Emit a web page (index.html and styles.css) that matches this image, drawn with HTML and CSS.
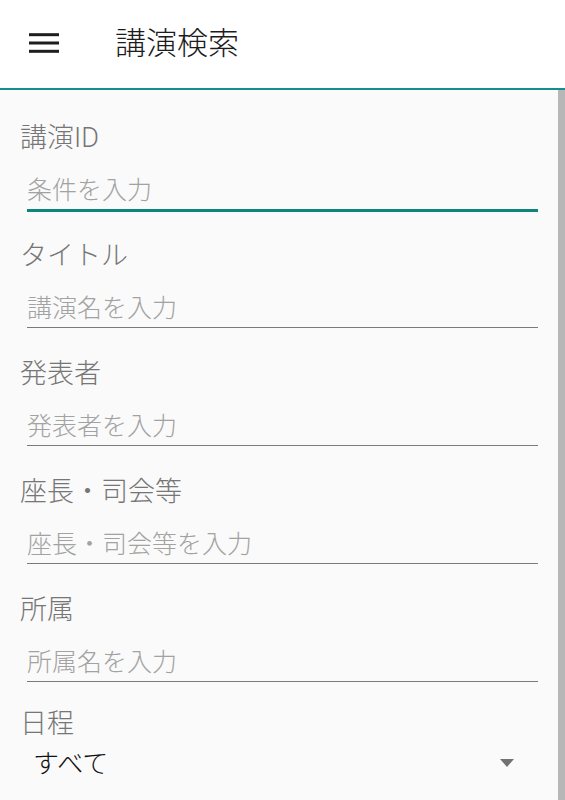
FILE: index.html
```html
<!DOCTYPE html>
<html lang="ja">
<head>
<meta charset="utf-8">
<title>講演検索</title>
<link rel="stylesheet" href="styles.css">
</head>
<body>
<header class="appbar">
  <svg class="menu" width="30" height="20" viewBox="0 0 30 20" aria-hidden="true">
    <rect x="0" y="0.2" width="30" height="3"/>
    <rect x="0" y="8.5" width="30" height="3"/>
    <rect x="0" y="16.8" width="30" height="3"/>
  </svg>
  <h1 class="title">講演検索</h1>
</header>
<div class="body">
  <main class="form">
    <div class="field">
      <label class="label">講演ID</label>
      <input class="input focused" type="text" placeholder="条件を入力">
    </div>
    <div class="field">
      <label class="label">タイトル</label>
      <input class="input" type="text" placeholder="講演名を入力">
    </div>
    <div class="field">
      <label class="label">発表者</label>
      <input class="input" type="text" placeholder="発表者を入力">
    </div>
    <div class="field">
      <label class="label">座長・司会等</label>
      <input class="input" type="text" placeholder="座長・司会等を入力">
    </div>
    <div class="field">
      <label class="label">所属</label>
      <input class="input" type="text" placeholder="所属名を入力">
    </div>
    <div class="field spinner-field">
      <label class="label">日程</label>
      <div class="spinner">
        <span class="spinner-value">すべて</span>
        <span class="caret"></span>
      </div>
    </div>
  </main>
  <div class="scrollbar"></div>
</div>
</body>
</html>
```

FILE: styles.css
```css
* { box-sizing: border-box; }
html, body {
  margin: 0;
  padding: 0;
  height: 100%;
  overflow: hidden;
}
body {
  font-family: Roboto, "Noto Sans CJK JP", sans-serif;
  font-weight: 300;
  background: #fafafa;
  display: flex;
  flex-direction: column;
}
.appbar {
  height: 90px;
  flex: none;
  background: #ffffff;
  border-bottom: 2px solid #14908a;
  display: flex;
  align-items: flex-start;
}
.menu {
  margin: 33px 0 0 29px;
  fill: #1e1e1e;
  flex: none;
}
.title {
  margin: 24px 0 0 56px;
  font-size: 31px;
  line-height: 40px;
  font-weight: 300;
  color: #1c1c1c;
}
.body {
  flex: 1;
  display: flex;
  min-height: 0;
}
.form {
  flex: 1;
  padding: 32px 20px 0 20px;
}
.scrollbar {
  width: 7px;
  flex: none;
  background: #b7b7b7;
}
.field {
  display: flex;
  flex-direction: column;
  height: 118px;
}
.label {
  font-size: 27px;
  line-height: 32px;
  color: #767676;
  margin-bottom: 18px;
}
.input {
  margin-left: 7px;
  width: 511px;
  height: 38px;
  padding: 3px 0 4px 0;
  border: 0;
  border-bottom: 1px solid #7a7a7a;
  background: transparent;
  font-family: Roboto, "Noto Sans CJK JP", sans-serif;
  font-weight: 300;
  font-size: 25px;
  line-height: 30px;
  color: #212121;
  outline: none;
}
.input::placeholder {
  color: #a2a2a2;
  opacity: 1;
}
.input.focused {
  border-bottom: 3px solid #0f857c;
  height: 40px;
  margin-bottom: -2px;
}
.spinner-field {
  margin-top: -4px;
}
.spinner-field .label {
  margin-bottom: 2px;
}
.spinner {
  display: flex;
  align-items: center;
  justify-content: space-between;
  margin-left: 13px;
  width: 481px;
  height: 40px;
}
.spinner-value {
  font-size: 26px;
  line-height: 40px;
  padding-top: 4px;
  color: #111111;
}
.caret {
  width: 0;
  height: 0;
  border-left: 7.5px solid transparent;
  border-right: 7.5px solid transparent;
  border-top: 8px solid #727272;
  margin-top: 2px;
}
```
